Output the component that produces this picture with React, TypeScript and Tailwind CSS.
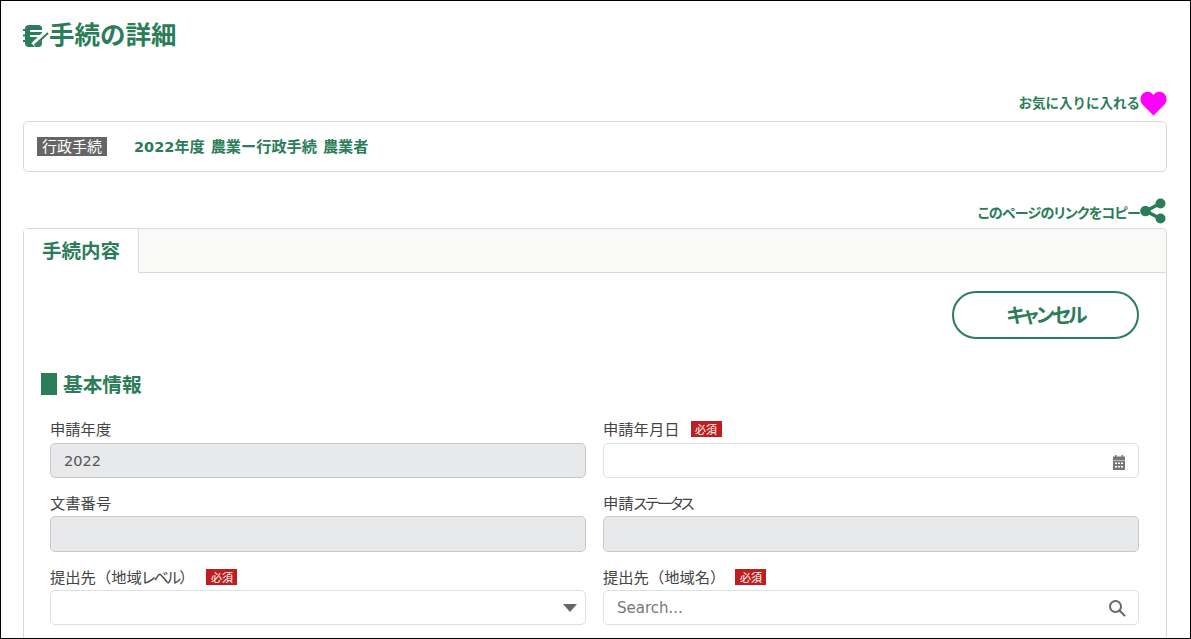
import React from "react";

const G = "text-[#2a7d58]";

function Req({ ml = "ml-[11px]" }: { ml?: string }) {
  return <span className={`${ml} inline-flex h-[16px] w-[31px] items-center justify-center bg-[#be1e1e] text-[11px] leading-none text-white`}>必須</span>;
}

function Field({ label, badge, children, mt = "mt-[14px]", mb = "mb-[2px]" }: { label: React.ReactNode; badge?: React.ReactNode; children: React.ReactNode; mt?: string; mb?: string }) {
  return (
    <div className={mt}>
      <div className={`flex h-[22px] items-center text-[15.300px] leading-[22px] text-[#444] ${mb}`}>
        <span>{label}</span>
        {badge}
      </div>
      {children}
    </div>
  );
}

const disabled = "rounded-[5px] border border-[#c8c8c8] bg-[#e8e9eb]";
const active = "rounded-[5px] border border-[#d5e4e0] bg-white";

export default function App() {
  return (
    <div className="h-[639px] w-[1191px] overflow-hidden border border-black bg-white pl-[22px] pr-[23px] font-['Open_Sans','Noto_Sans_CJK_JP',sans-serif]">
      <div className={`flex h-[68px] items-start pt-[15px] ${G}`}>
        <svg width="26" height="28" viewBox="0 0 26 28" className="mt-[4px]" fill="none">
          <rect x="2" y="5" width="17" height="22" rx="4" fill="#2a7d58" />
          <path d="M0 10h3M0 15.500h3M0 21h3" stroke="#2a7d58" strokeWidth="2.200" />
          <path d="M7 11h14M7 16h11" stroke="#fff" strokeWidth="2" />
          <path d="M10 25 23.500 12" stroke="#fff" strokeWidth="5" />
          <path d="M11.500 25.500 25 13" stroke="#2a7d58" strokeWidth="2" />
        </svg>
        <h1 className="text-[25.500px] font-bold leading-[36px]">手続の詳細</h1>
      </div>

      <div className={`mt-[21px] mb-[4px] flex h-[27px] items-center justify-end text-[13.500px] font-bold ${G}`}>
        <span>お気に入りに入れる</span>
        <svg width="27" height="25" viewBox="0 0 27 25">
          <path d="M13.500 24.500 2.500 13.500C-.5 10.500 0 5 3 2.500 6.500-.5 11 .5 13.500 4c2.500-3.500 7-4.500 10.500-1.500 3 2.500 3.500 8 .5 11z" fill="#ff00ff" />
        </svg>
      </div>

      <div className="flex h-[51px] items-center rounded-[5px] border border-[#d9d9d9] pl-[13px]">
        <span className="flex h-[19px] w-[70px] items-center justify-center bg-[#666] text-[15px] leading-none text-white">行政手続</span>
        <span className={`ml-[27px] text-[15.200px] font-bold [word-spacing:2px] ${G}`}>
          <span className="font-['DejaVu_Sans'] text-[14.500px]">2022</span>年度 農業ー行政手続 農業者
        </span>
      </div>

      <div className={`mt-[25px] flex h-[31px] items-center justify-end text-[14px] font-bold ${G}`}>
        <span className="tracking-[-0.700px] [font-feature-settings:'palt']">このページのリンクをコピー</span>
        <svg width="26" height="26" viewBox="0 0 26 26" className="mr-[1px] mt-[-3px]">
          <path d="M20 5.500 6 13l14 7.500" stroke="#2a7d58" strokeWidth="3.500" fill="none" />
          <circle cx="20.500" cy="5.500" r="5" fill="#2a7d58" />
          <circle cx="20.500" cy="20.500" r="5" fill="#2a7d58" />
          <circle cx="5.500" cy="13" r="5.300" fill="#2a7d58" />
        </svg>
      </div>

      <div className="h-[420px] rounded-t-[5px] border border-[#d9d9d9]">
        <div className="flex h-[44px] rounded-t-[5px] bg-[#f9f9f7]">
          <div className={`flex h-[44px] w-[115px] items-center justify-center border-r border-[#d9d9d9] bg-white text-[19.500px] font-bold ${G}`}>手続内容</div>
          <div className="flex-1 border-b border-[#d9d9d9]" />
        </div>

        <div className="pl-[17px] pr-[27px] pt-[18px]">
          <div className="flex justify-end">
            <button className={`h-[48px] w-[187px] rounded-full border-2 border-[#2a7d58] bg-white pt-[2px] text-[20px] font-bold tracking-[-2.800px] [font-feature-settings:'palt'] ${G}`}>キャンセル</button>
          </div>

          <div className={`mt-[34px] flex h-[22px] items-center text-[19.700px] font-bold ${G}`}>
            <span className="h-[22px] w-[16px] bg-[#2a7d58]" />
            <span className="ml-[6px] pt-[2px]">基本情報</span>
          </div>

          <div className="mt-[23px] grid grid-cols-[536px_536px] gap-x-[17px] pl-[9px]">
            <Field label="申請年度" mt="" mb="mb-[3px]">
              <div className={`flex h-[35px] items-center pl-[13px] pt-[2px] font-['DejaVu_Sans'] text-[14.500px] text-[#555] ${disabled}`}>2022</div>
            </Field>
            <Field label="申請年月日" mt="" mb="mb-[3px]" badge={<Req />}>
              <div className={`flex h-[35px] items-center justify-end pr-[12px] pt-[4px] ${active}`}>
                <svg width="14" height="15" viewBox="0 0 14 15" fill="#777">
                  <path d="M3 0h1.500v2H3zM9.500 0H11v2H9.500zM1 1.500h12V5H1zM1 5.500h12V15H1z" />
                  <path d="M3 7.500h2V9H3zM6 7.500h2V9H6zM9 7.500h2V9H9zM3 11h2v1.500H3zM6 11h2v1.500H6zM9 11h2v1.500H9z" fill="#fff" />
                </svg>
              </div>
            </Field>
            <Field label="文書番号">
              <div className={`h-[36px] ${disabled}`} />
            </Field>
            <Field label={<>申請<span className="tracking-[-2.200px] [font-feature-settings:'palt']">ステータス</span></>}>
              <div className={`h-[36px] ${disabled}`} />
            </Field>
            <Field label={<>提出先（地域<span className="tracking-[-2px] [font-feature-settings:'palt']">レベル</span>）</>} badge={<Req ml="ml-[12px]" />}>
              <div className={`flex h-[35px] items-center justify-end pr-[8px] ${active}`}>
                <svg width="14" height="8" viewBox="0 0 14 8"><path d="M0 0h14L7 8z" fill="#666" /></svg>
              </div>
            </Field>
            <Field label="提出先（地域名）" badge={<Req ml="ml-[10px]" />}>
              <div className={`flex h-[35px] items-center justify-between pl-[13px] pr-[12px] ${active}`}>
                <span className="pt-[2px] font-['DejaVu_Sans'] text-[15px] text-[#777]">Search...</span>
                <svg width="18" height="18" viewBox="0 0 18 18" fill="none" stroke="#666" strokeWidth="2">
                  <circle cx="7.500" cy="7.500" r="5.500" />
                  <path d="m11.500 11.500 5 5" strokeLinecap="round" />
                </svg>
              </div>
            </Field>
          </div>
        </div>
      </div>
    </div>
  );
}
